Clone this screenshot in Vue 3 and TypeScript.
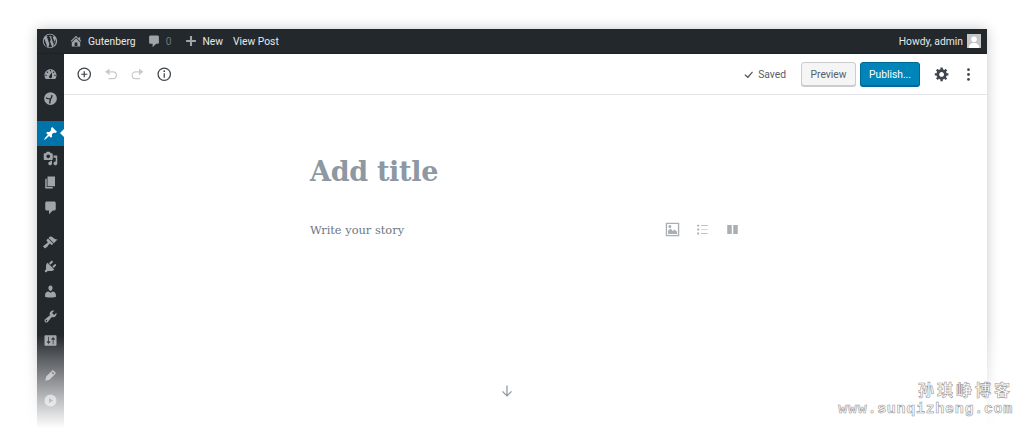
<template>
  <div class="page">
    <div class="window">
      <header class="admin-bar">
        <div class="bar-left">
          <svg class="wp-logo" viewBox="0 0 20 20"><path :d="icons.wp" /></svg>
          <span class="bar-item home">
            <svg class="bar-icon" viewBox="0 0 20 20"><path :d="icons.home" /></svg>
            Gutenberg
          </span>
          <span class="bar-item comments">
            <svg class="bar-icon" viewBox="0 0 20 20"><path :d="icons.comment" /></svg>
            <span class="count">0</span>
          </span>
          <span class="bar-item new">
            <svg class="bar-icon" viewBox="0 0 20 20"><path :d="icons.plus" /></svg>
            New
          </span>
          <span class="bar-item">View Post</span>
        </div>
        <div class="bar-right">
          <span>Howdy, admin</span>
          <svg class="avatar" viewBox="0 0 14 14">
            <rect width="14" height="14" fill="#c4c6c8" />
            <circle cx="7" cy="5.2" r="2.8" fill="#fff" />
            <path d="M1.8 14c0-3.4 2.2-5 5.2-5s5.2 1.6 5.2 5z" fill="#fff" />
          </svg>
        </div>
      </header>

      <div class="body">
        <nav class="sidebar">
          <div v-for="(group, g) in menu" :key="g" class="menu-group">
            <div
              v-for="item in group"
              :key="item.name"
              class="menu-item"
              :class="{ active: item.active }"
            >
              <svg class="menu-icon" viewBox="0 0 20 20"><path fill-rule="evenodd" :d="item.d" /></svg>
            </div>
          </div>
        </nav>

        <main class="editor">
          <div class="toolbar">
            <div class="tools">
              <svg class="tool" viewBox="0 0 24 24">
                <circle cx="12" cy="12" r="9" class="line" />
                <path d="M12 7.500v9M7.500 12h9" class="line" />
              </svg>
              <svg class="tool off" viewBox="0 0 24 24">
                <path d="M5 8.500h9.500a5 5 0 0 1 0 10H8" class="line" />
                <path d="M9.500 3.500v10L3 8.500z" class="solid" />
              </svg>
              <svg class="tool off" viewBox="0 0 24 24">
                <path d="M19 8.500H9.500a5 5 0 0 0 0 10H16" class="line" />
                <path d="M14.500 3.500v10L21 8.500z" class="solid" />
              </svg>
              <svg class="tool" viewBox="0 0 24 24">
                <circle cx="12" cy="12" r="9" class="line" />
                <path d="M12 10.500v6.500" class="line" />
                <circle cx="12" cy="7.600" r="1.300" class="solid" />
              </svg>
            </div>
            <div class="actions">
              <span class="saved">
                <svg class="check" viewBox="0 0 20 20"><path d="M16.500 4.500l1.600 1.200-8.600 10.800h-1.400L2.500 11l1.500-1.500 4.700 3.700z" /></svg>
                Saved
              </span>
              <button class="btn btn-preview">Preview</button>
              <button class="btn btn-publish">Publish...</button>
              <svg class="gear" viewBox="0 0 20 20"><path :d="icons.gear" /></svg>
              <svg class="more" viewBox="0 0 4 16">
                <circle cx="2" cy="2" r="1.700" /><circle cx="2" cy="8" r="1.700" /><circle cx="2" cy="14" r="1.700" />
              </svg>
            </div>
          </div>

          <div class="content">
            <h1 class="title">Add title</h1>
            <div class="block">
              <span class="placeholder">Write your story</span>
              <div class="inserters">
                <svg viewBox="0 0 20 20"><path fill-rule="evenodd" d="M1 1h18v18H1zM2.800 2.800v14.400h14.400V2.800zM4 16v-4.500l3.500-3 3 3.500 2.500-2 3 3V16zM6.500 4a2 2 0 1 1 0 4 2 2 0 0 1 0-4z" /></svg>
                <svg viewBox="0 0 20 20"><path d="M3 3.500h2.500V6H3zm5 .8h9v.9H8zM3 8.700h2.500v2.500H3zm5 .8h9v.9H8zM3 14h2.500v2.500H3zm5 .8h9v.9H8z" /></svg>
                <svg viewBox="0 0 20 20"><path d="M3 4h6v12H3zm8 0h6v12h-6z" /></svg>
              </div>
            </div>
            <svg class="arrow" viewBox="0 0 20 20"><path d="M10 2v15M3.500 10.500L10 17l6.500-6.500" /></svg>
          </div>
        </main>
      </div>
    </div>

    <div class="fade"></div>

    <div class="watermark">
      <div class="wm-name">孙琪峥博客</div>
      <div class="wm-url">www.sunqizheng.com</div>
    </div>
  </div>
</template>

<script setup lang="ts">
interface MenuItem {
  name: string
  d: string
  active?: boolean
}

const icons = {
  wp: 'M10 1a9 9 0 1 0 0 18 9 9 0 0 0 0-18zm0 1a8 8 0 0 1 5.400 2.100c-1-.1-1.800.7-1.800 1.600 0 .9.500 1.600 1 2.400.4.700.7 1.500.7 2.700l-.9 3-3.100-9.200h.9c.3 0 .3-.6 0-.6-1.100.1-2.200.1-3.300 0-.3 0-.3.600 0 .600h.8l1.300 3.500-1.800 5.500-3.100-9h.9c.3 0 .3-.6 0-.6l-2.400.1A8 8 0 0 1 10 2zM2.900 7.100l3.800 10.300A8 8 0 0 1 2.900 7.100zm7.200 3.500l2.400 6.600A8 8 0 0 1 8 17.800zm6.200-3.700a8 8 0 0 1-2.600 9.900l2.400-7c.4-1 .5-1.900.2-2.900z',
  home: 'M16 8.500l1.530 1.530-1.060 1.060L10 4.620l-6.470 6.470-1.060-1.060L10 2.500l4 4v-2h2v4zm-6-2.460l6 5.990V18H4v-5.970zM12 17v-5H8v5h4z',
  comment: 'M5 2h10c1.100 0 2 .9 2 2v8c0 1.100-.9 2-2 2h-2l-5 5v-5H5c-1.100 0-2-.9-2-2V4c0-1.100.9-2 2-2z',
  plus: 'M17 8.500v3h-5.500V17h-3v-5.500H3v-3h5.500V3h3v5.500z',
  gear: 'M18 12h-2.180c-.17.700-.44 1.350-.81 1.930l1.540 1.540-2.100 2.100-1.540-1.540c-.58.360-1.230.630-1.910.790V19H8v-2.180c-.68-.16-1.330-.43-1.910-.79l-1.540 1.540-2.120-2.120 1.540-1.540c-.36-.58-.63-1.230-.79-1.910H1V9.030h2.170c.16-.7.440-1.350.8-1.940L2.430 5.550l2.100-2.100 1.540 1.540c.58-.37 1.240-.64 1.930-.81V2h3v2.180c.68.160 1.330.430 1.910.790l1.540-1.540 2.120 2.120-1.540 1.540c.36.590.640 1.240.8 1.940H18V12zm-8.500 1.500c1.660 0 3-1.340 3-3s-1.340-3-3-3-3 1.340-3 3 1.340 3 3 3z'
}

const menu: MenuItem[][] = [
  [
    { name: 'dashboard', d: 'M3.760 16h12.480c1.100-1.370 1.760-3.110 1.760-5 0-4.420-3.580-8-8-8s-8 3.580-8 8c0 1.890.66 3.630 1.760 5zM10 4c.55 0 1 .45 1 1s-.45 1-1 1-1-.45-1-1 .45-1 1-1zM6 6c.55 0 1 .45 1 1s-.45 1-1 1-1-.45-1-1 .45-1 1-1zm8 0c.55 0 1 .45 1 1s-.45 1-1 1-1-.45-1-1 .45-1 1-1zm-5.370 5.550L12 7v6c0 1.100-.9 2-2 2s-2-.9-2-2c0-.57.24-1.080.63-1.450zM4 10c.55 0 1 .45 1 1s-.45 1-1 1-1-.45-1-1 .45-1 1-1zm12 0c.55 0 1 .45 1 1s-.45 1-1 1-1-.45-1-1 .45-1 1-1z' },
    { name: 'jetpack', d: 'M10 1.500a8.500 8.500 0 1 1 0 17 8.500 8.500 0 0 1 0-17zM3.500 9.500c1.500 1.500 3.500 1.800 5.200 1.200L8 16.500l1.800.3 1-5.700c1-.8 1.700-2.600 2-5.600l-1.800-.3c-.2 2.100-.6 3.500-1.200 4.300-1.800.6-3.800.3-5.200-1.200z' }
  ],
  [
    { name: 'posts', active: true, d: 'M10.440 3.020l1.820-1.820 6.360 6.350-1.830 1.820c-1.050-.68-2.480-.57-3.410.36l-.75.75c-.92.93-1.040 2.350-.35 3.410l-1.830 1.820-2.410-2.410-2.800 2.790c-.42.42-3.380 2.710-3.800 2.290s1.860-3.390 2.280-3.810l2.790-2.790L4.100 9.360l1.830-1.820c1.050.69 2.480.57 3.400-.36l.75-.75c.93-.92 1.050-2.350.36-3.410z' },
    { name: 'media', d: 'M13 11V4c0-.55-.45-1-1-1h-1.670L9 1H5L3.670 3H2c-.55 0-1 .45-1 1v7c0 .55.45 1 1 1h10c.55 0 1-.45 1-1zM7 4.500c1.380 0 2.500 1.120 2.500 2.500S8.380 9.500 7 9.500 4.500 8.380 4.500 7 5.620 4.500 7 4.500zM14 6h5v10.500c0 1.380-1.120 2.500-2.500 2.500S14 17.880 14 16.500s1.120-2.500 2.500-2.500c.17 0 .34.020.5.050V9h-3V6zm-4 8.050V13h2v3.500c0 1.380-1.120 2.500-2.500 2.500S7 17.880 7 16.500 8.120 14 9.500 14c.17 0 .34.020.5.050z' },
    { name: 'pages', d: 'M6 15V2h10v13H6zm-1 1h8v2H3V5h2v11z' },
    { name: 'comments', d: 'M5 2h10c1.100 0 2 .9 2 2v8c0 1.100-.9 2-2 2h-2l-5 5v-5H5c-1.100 0-2-.9-2-2V4c0-1.100.9-2 2-2z' }
  ],
  [
    { name: 'appearance', d: 'M14.480 11.060L7.410 3.990l1.500-1.500c.5-.56 2.300-.47 3.510.32 1.210.8 1.430 1.280 2.910 2.100 1.180.64 2.450 1.260 4.230.91zm-.71.710L6.700 4.700 4.930 6.470c-.39.390-.39 1.020 0 1.410l1.060 1.060c.39.390.39 1.030 0 1.420-.6.600-1.430 1.110-2.210 1.690-.35.260-.7.530-1.010.84C1.430 13.730 0 15.180 0 15.180L2.830 18c0 0 1.900-1.770 3.110-2.770.31-.31.580-.66.840-1.010.58-.78 1.090-1.610 1.690-2.210.39-.39 1.020-.39 1.410 0l1.060 1.060c.39.390 1.030.39 1.420 0z' },
    { name: 'plugins', d: 'M13.110 4.360L9.870 7.600 8 5.730l3.240-3.240c.35-.34 1.050-.2 1.560.32.52.51.66 1.210.31 1.550zm-8 1.770l.91-1.120 9.010 9.010-1.190.84c-.71.710-2.630 1.160-3.820 1.160H6.140L4.900 17.260c-.59.59-1.540.59-2.120 0-.59-.58-.59-1.530 0-2.120l1.240-1.240v-3.880c0-1.130.4-3.190 1.090-3.890zm7.260 3.970l3.240-3.240c.34-.35 1.040-.21 1.550.31.52.51.66 1.210.31 1.550l-3.240 3.250z' },
    { name: 'users', d: 'M10 9.250c-2.270 0-2.730-3.440-2.730-3.440C7 4.020 7.820 2 9.970 2c2.160 0 2.980 2.020 2.710 3.810 0 0-.41 3.440-2.680 3.440zm0 2.570L12.720 10c2.390 0 4.520 2.330 4.520 4.530v2.490s-3.650 1.130-7.240 1.130c-3.650 0-7.240-1.130-7.240-1.130v-2.490c0-2.250 1.940-4.480 4.470-4.480z' },
    { name: 'tools', d: 'M16.680 9.770c-1.340 1.340-3.300 1.670-4.950.99l-5.410 6.520c-.99.990-2.590.99-3.580 0s-.99-2.590 0-3.570l6.520-5.420c-.68-1.650-.35-3.610.99-4.950 1.280-1.280 3.120-1.620 4.720-1.060l-2.890 2.890 2.820 2.820 2.860-2.870c.53 1.580.18 3.390-1.080 4.650zM3.810 16.210c.4.390 1.030.39 1.420 0 .4-.4.400-1.030 0-1.430-.39-.39-1.020-.39-1.420 0-.39.4-.39 1.030 0 1.430z' },
    { name: 'settings', d: 'M18 16V4c0-.55-.45-1-1-1H3c-.55 0-1 .45-1 1v12c0 .55.45 1 1 1h14c.55 0 1-.45 1-1zM8 11h1c.55 0 1 .45 1 1s-.45 1-1 1H8v1.500c0 .28-.22.5-.5.5s-.5-.22-.5-.5V13H6c-.55 0-1-.45-1-1s.45-1 1-1h1V5.500c0-.28.22-.5.5-.5s.5.22.5.5V11zm5-2h-1c-.55 0-1-.45-1-1s.45-1 1-1h1V5.500c0-.28.22-.5.5-.5s.5.22.5.5V7h1c.55 0 1 .45 1 1s-.45 1-1 1h-1v5.500c0 .28-.22.5-.5.5s-.5-.22-.5-.5V9z' }
  ],
  [
    { name: 'edit', d: 'M13.890 3.390l2.710 2.720c.46.460.420 1.240.030 1.640l-8.010 8.020-5.560 1.160 1.160-5.580 7.990-8.020c.39-.39 1.210-.40 1.680.06zM12.800 5.100l-1.300 1.300 2.100 2.100 1.300-1.300z' },
    { name: 'play', d: 'M10 2a8 8 0 1 1 0 16 8 8 0 0 1 0-16zM8 6.500v7l5.500-3.500z' }
  ]
]
</script>

<style>
html,
body {
  margin: 0;
  background: #fff;
}
</style>

<style scoped>
.page {
  position: relative;
  width: 1024px;
  height: 430px;
  overflow: hidden;
  padding: 29px 0 0 37px;
  box-sizing: border-box;
  background: #fff;
  font-family: Roboto, "Liberation Sans", sans-serif;
}

.window {
  width: 950px;
  height: 440px;
  background: #fff;
  box-shadow: 0 0 12px rgba(0, 0, 0, 0.22);
  display: flex;
  flex-direction: column;
}

.admin-bar {
  height: 24px;
  flex: none;
  background: #23282d;
  border-bottom: 1px solid #1d2125;
  color: #e6e8ea;
  font-size: 10.300px;
  display: flex;
  align-items: center;
  justify-content: space-between;
  padding: 0 6px 0 5px;
}

.bar-left,
.bar-right,
.bar-item {
  display: flex;
  align-items: center;
}

.wp-logo {
  width: 16px;
  height: 16px;
  fill: #9ea3a8;
  margin-right: 11px;
}

.bar-item {
  margin-right: 11px;
  gap: 5px;
}

.bar-icon {
  width: 14px;
  height: 14px;
  fill: #a0a5aa;
}

.comments {
  margin-right: 13px;
}

.count {
  color: #6f757a;
}

.new {
  gap: 4px;
  margin-right: 10px;
}

.bar-right {
  gap: 4px;
}

.avatar {
  width: 14px;
  height: 14px;
}

.body {
  flex: 1;
  display: flex;
  min-height: 0;
}

.sidebar {
  width: 27px;
  flex: none;
  background: #23282d;
  padding-top: 8px;
  box-sizing: border-box;
  display: flex;
  flex-direction: column;
  gap: 10px;
}

.menu-item {
  position: relative;
  height: 24.670px;
  display: flex;
  align-items: center;
  justify-content: center;
}

.menu-icon {
  width: 15px;
  height: 15px;
  fill: #a0a5aa;
}

.menu-item.active {
  background: #0073aa;
}

.menu-item.active .menu-icon {
  fill: #fff;
}

/* little notch pointing at the content */
.menu-item.active::after {
  content: "";
  position: absolute;
  right: 0;
  top: 8px;
  border: 4px solid transparent;
  border-right-color: #fff;
  border-left-width: 0;
}

.editor {
  flex: 1;
  min-width: 0;
  display: flex;
  flex-direction: column;
}

.toolbar {
  height: 41px;
  flex: none;
  box-sizing: border-box;
  border-bottom: 1px solid #e2e4e7;
  display: flex;
  align-items: center;
  justify-content: space-between;
  padding: 0 12px;
}

.tools {
  display: flex;
  align-items: center;
  gap: 10px;
}

.tool {
  width: 16.500px;
  height: 16.500px;
  color: #3e444a;
}

.tool.off {
  color: #c8cbce;
}

.line {
  fill: none;
  stroke: currentColor;
  stroke-width: 1.800;
}

.solid {
  fill: currentColor;
}

.actions {
  display: flex;
  align-items: center;
}

.saved {
  display: flex;
  align-items: center;
  gap: 4px;
  font-size: 10.300px;
  color: #555d66;
  margin-right: 15px;
}

.check {
  width: 11px;
  height: 11px;
  fill: #555d66;
}

.btn {
  height: 24px;
  padding: 0;
  border-radius: 3px;
  font-family: inherit;
  font-size: 10.300px;
  box-sizing: border-box;
}

.btn-preview {
  width: 55px;
  margin-right: 4px;
  color: #555d66;
  background: #f5f5f5;
  border: 1px solid #ccc;
  box-shadow: 0 1px 0 #ccc;
}

.btn-publish {
  width: 60px;
  color: #fff;
  background: #0085ba;
  border: 1px solid #006a95;
  box-shadow: 0 1px 0 #006799;
}

.gear {
  width: 16px;
  height: 16px;
  fill: #40464d;
  margin-left: 14px;
}

.more {
  width: 5px;
  height: 13px;
  fill: #40464d;
  margin-left: 16px;
  margin-right: 4px;
}

.content {
  position: relative;
  flex: 1;
  width: 430px;
  margin-left: 246px;
}

.title {
  margin: 58px 0 0;
  font-family: "DejaVu Serif", serif;
  font-size: 27px;
  line-height: 38px;
  letter-spacing: -0.300px;
  font-weight: 700;
  color: #8d98a2;
}

.block {
  display: flex;
  align-items: center;
  justify-content: space-between;
  margin-top: 27px;
  height: 24px;
}

.placeholder {
  font-family: "DejaVu Serif", serif;
  font-size: 11.400px;
  color: #6c7781;
}

.inserters {
  display: flex;
  gap: 15px;
  align-items: center;
  margin-bottom: 2px;
}

.inserters svg {
  width: 15px;
  height: 15px;
  fill: #a9afb5;
}

.arrow {
  position: absolute;
  left: 190px;
  top: 289px;
  z-index: 2;
  width: 14px;
  height: 14px;
  fill: none;
  stroke: #8f98a1;
  stroke-width: 1.800;
}

.fade {
  position: absolute;
  z-index: 1;
  left: 0;
  right: 0;
  top: 335px;
  height: 95px;
  background: linear-gradient(to bottom, rgba(255, 255, 255, 0), #fff 98%);
}

.watermark {
  position: absolute;
  z-index: 3;
  right: 11px;
  top: 380px;
  text-align: right;
  color: #fff;
  -webkit-text-stroke: 0.600px #9a9a9a;
  font-weight: 700;
}

.wm-name {
  font-family: "Noto Sans CJK SC", sans-serif;
  font-size: 16px;
  line-height: 19px;
  letter-spacing: 3px;
}

.wm-url {
  font-family: "Liberation Mono", monospace;
  font-size: 15px;
  line-height: 18px;
  letter-spacing: 0.700px;
  margin-top: 2px;
}
</style>
